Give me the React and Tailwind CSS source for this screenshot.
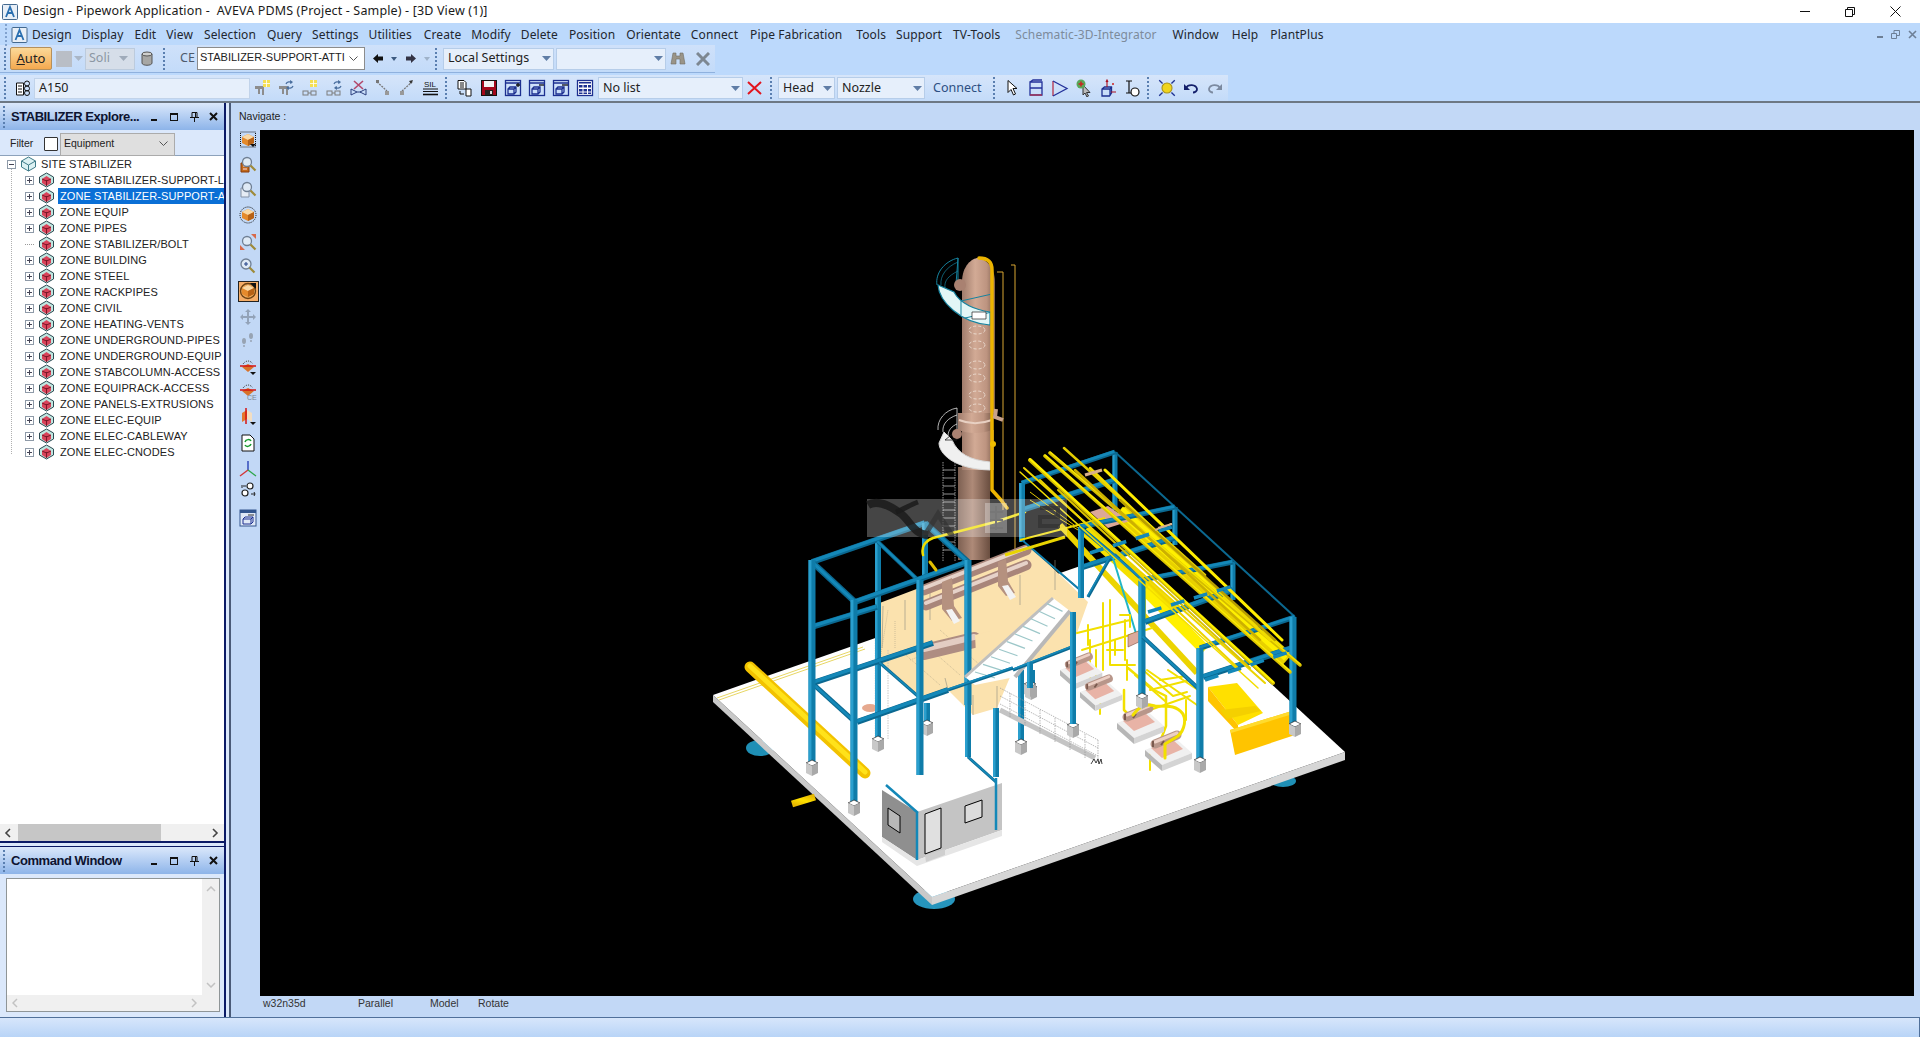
import React from "react";

const Grip = ({ className = "" }) => (
  <div className={"flex flex-col justify-center gap-[2px] w-[3px] shrink-0 " + className}>
    {[0, 1, 2, 3, 4, 5].map((i) => (
      <span key={i} className="block w-[2px] h-[2px] bg-[#5a7fb0]" />
    ))}
  </div>
);

const Arrow = ({ color = "#5f7da6" }) => (
  <svg width="9" height="5" viewBox="0 0 9 5" className="shrink-0"><path d="M0 0h9L4.5 5z" fill={color} /></svg>
);

const Combo = ({ w, text, cls = "", textCls = "text-[#222]" }) => (
  <div className={"flex items-center justify-between h-[22px] shrink-0 bg-[#e6effb] border border-[#b6cde9] pl-1 pr-[2px] text-[12.5px] " + w + " " + cls}>
    <span className={textCls}>{text}</span>
    <Arrow />
  </div>
);

const I = ({ children, w = 24, size = 18 }) => (
  <div className="flex items-center justify-center shrink-0 h-full" style={{ width: w }}>
    <svg width={size} height={size} viewBox="0 0 18 18">{children}</svg>
  </div>
);

const PipeBase = () => (
  <path d="M1 7h9v9H8v-6H6v5H4V10H1z" fill="#8d8d8d" />
);
const Star = ({ x = 9, y = 1 }) => (
  <g fill="#f4df52"><rect x={x} y={y} width="7" height="7" /><path d={`M${x + 3.5} ${y}v7M${x} ${y + 3.5}h7`} stroke="#fff" strokeWidth=".8" /></g>
);
const Cycle = () => (
  <g fill="none" stroke="#4a6f9f" strokeWidth="1.3"><path d="M8 5a3.6 3.6 0 0 1 6-1" /><path d="M15 7a3.6 3.6 0 0 1-6 1" /><path d="M12 1l3 2-3 2zM11 7l-3 2 3 2z" fill="#4a6f9f" stroke="none" /></g>
);
const Valve = () => (
  <g fill="none" stroke="#7d7d7d"><rect x="1" y="12" width="5" height="4" /><rect x="9" y="12" width="5" height="4" /><path d="M6 14h3" /></g>
);

const row2Left = [
  <I key="a"><PipeBase /><Star /></I>,
  <I key="b"><PipeBase /><Cycle /></I>,
  <I key="c"><Valve /><Star x={8} y={1} /></I>,
  <I key="d"><Valve /><Cycle /></I>,
  <I key="e">
    <path d="M4 2l9 8M13 2L4 10" stroke="#b2486b" strokeWidth="1.6" />
    <path d="M1 10v6l6-3zM16 10v6l-6-3z" fill="none" stroke="#2b3f7d" />
    <path d="M7 13h4" stroke="#2b3f7d" />
  </I>,
  <I key="f">
    <path d="M3 3l10 9" stroke="#777" strokeDasharray="2 1" strokeWidth="1.3" /><rect x="2" y="1" width="3" height="3" fill="#777" /><rect x="11" y="12" width="4" height="4" fill="#999" />
  </I>,
  <I key="g">
    <path d="M4 12L15 2" stroke="#777" strokeDasharray="2 1" strokeWidth="1.3" /><path d="M15 1l-4 1 2 3z" fill="#333" /><rect x="2" y="12" width="4" height="4" fill="#999" />
  </I>,
  <I key="h">
    <text x="2" y="8" fontSize="8" fill="#111" fontFamily="Liberation Sans">SIL</text>
    <path d="M1 10h15" stroke="#111" /><path d="M1 12.500h15" stroke="#111" /><path d="M1 15.500h15" stroke="#111" strokeWidth="1.6" />
  </I>,
];

const Cube3 = ({ sign }) => (
  <g fill="none" stroke="#1c2f90" strokeWidth="1.300">
    <rect x="1.500" y="1.500" width="15" height="15" />
    <path d="M2 4h14" stroke="#1c2f90" strokeWidth="1.500" />
    <path d="M4 10l2-2h6v5l-2 2H4zM4 10h6v5M10 10l2-2" />
    {sign === "+" && <path d="M12 6h4M14 4v4" stroke="#111" />}
    {sign === "-" && <path d="M11 6h5" stroke="#111" />}
    {sign === "=" && <path d="M10 6h6" stroke="#111" />}
  </g>
);

const row2Mid = [
  <I key="a" w={27}>
    <path d="M3 1.500h6l2 2V10H3z" fill="#fff" stroke="#111" /><path d="M5 4h4M5 6h4M5 8h4" stroke="#111" />
    <path d="M11 10h5v7h-5z" fill="#fff" stroke="#111" /><path d="M5 12v3h4" fill="none" stroke="#111" />
  </I>,
  <I key="b">
    <rect x="1.500" y="1.500" width="15" height="15" fill="#a3071b" stroke="#111" /><rect x="4" y="2" width="10" height="6" fill="#f2f2f2" /><rect x="5" y="11" width="8" height="5" fill="#222" /><rect x="10" y="12" width="2" height="3" fill="#ddd" />
  </I>,
  <I key="c"><Cube3 sign="+" /></I>,
  <I key="d"><Cube3 sign="-" /></I>,
  <I key="e"><Cube3 sign="=" /></I>,
  <I key="f">
    <rect x="1.500" y="1.500" width="15" height="15" fill="#fff" stroke="#1c2f90" strokeWidth="1.300" />
    <path d="M3 3h12v1.500H3z" fill="#1c2f90" />
    <path d="M3 6h3.500v2.500H3zM7.500 6H11v2.500H7.500zM12 6h3v2.500h-3zM3 10h3.500v2.500H3zM7.500 10H11v2.500H7.500zM12 10h3v2.500h-3zM3 13.500h3.500V15H3zM7.500 13.500H11V15H7.500zM12 13.500h3V15h-3z" fill="#1c2f90" />
  </I>,
];

const row2Right = [
  <I key="a"><path d="M5 1.500v12l3-3 2.500 5.500 2-1L10 9.500h4z" fill="#fff" stroke="#111" /></I>,
  <I key="b"><path d="M3 3h12v13H3zM3 3l3-2h9M3 9h12" fill="none" stroke="#23319a" strokeWidth="1.300" /><path d="M3 16h12" stroke="#b5324a" strokeWidth="1.300" /></I>,
  <I key="c"><path d="M2 2v15" stroke="#b5324a" strokeWidth="1.300" /><path d="M2 2l14 7.500L2 17" fill="none" stroke="#23319a" strokeWidth="1.300" /></I>,
  <I key="d">
    <path d="M8 6v10l2-2 2 4 1.500-1-2-3.500H15z" fill="#bbb" stroke="#333" /><circle cx="6" cy="5" r="4.500" fill="#58a85a" /><path d="M3.500 5h5M6 2.500v5" stroke="#c22" strokeWidth="1.500" />
  </I>,
  <I key="e">
    <path d="M3 10l2.500-2h7v6l-2 3H3zM3 10h8v7M11 10l2-2" fill="none" stroke="#1c2f90" strokeWidth="1.300" /><path d="M8 8V2M7 3l1-2 1 2M12 13h5" stroke="#a12" strokeWidth="1.100" fill="none" /><circle cx="14" cy="5" r="1" fill="#c22" />
  </I>,
  <I key="f"><path d="M6 2v12M3 2h6M3 14h6" stroke="#111" strokeWidth="1.200" fill="none" /><circle cx="12" cy="13" r="4" fill="#fff" stroke="#111" strokeWidth="1.200" /></I>,
];

const row2End = [
  <I key="a" size={20}>
    <circle cx="9" cy="9" r="4.500" fill="#f0d41d" stroke="#a9921a" />
    <path d="M2 2l3 3M16 2l-3 3M2 16l3-3M16 16l-3-3" stroke="#1c2f90" strokeWidth="1.200" />
  </I>,
  <I key="b"><path d="M4 9c2-4 10-4 11 1 .2 2-2 3.500-4 3.500" fill="none" stroke="#14206b" strokeWidth="1.800" /><path d="M2 5v6h6z" fill="#14206b" /></I>,
  <I key="c"><path d="M14 9c-2-4-10-4-11 1-.2 2 2 3.500 4 3.500" fill="none" stroke="#7c8aa0" strokeWidth="1.800" /><path d="M16 5v6h-6z" fill="#7c8aa0" /></I>,
];

const Orange = () => (
  <g><path d="M9 3l6 3v6l-6 3-6-3V6z" fill="#e48a2c" /><path d="M3 6l6 3 6-3-6-3z" fill="#f9d9a6" /><path d="M9 9v6l6-3V6z" fill="#b76216" /></g>
);
const Lens = ({ cx = 7, cy = 7, r = 4.500, fill = "#dfeaf6" }) => (
  <g><circle cx={cx} cy={cy} r={r} fill={fill} stroke="#6f7f94" strokeWidth="1.300" /><path d={`M${cx + 3.5} ${cy + 3.5}l5 5`} stroke="#9e8a3a" strokeWidth="2.200" /></g>
);

const vIcons = [
  { m: "", i: <><rect x="1.500" y="1" width="15" height="15" fill="none" stroke="#111" strokeDasharray="1 1" /><Orange /><path d="M11 13h6l-3 3z" fill="#111" /></> },
  { m: "mt-[5px]", i: <><path d="M2 7h8v9H2z" fill="#c2691b" stroke="#8a3c0d" /><path d="M4 10h4M4 13h4" stroke="#fde" /><Lens cx={8} cy={6} /></> },
  { m: "mt-[5px]", i: <><path d="M2 7h8v9H2z" fill="#e6ecf5" stroke="#8592a6" /><Lens cx={8} cy={6} /></> },
  { m: "mt-[5px]", i: <><circle cx="9" cy="9" r="8" fill="none" stroke="#111" strokeDasharray="1 1" /><Orange /></> },
  { m: "mt-[7px]", i: <><Lens cx={8} cy={8} /><path d="M12 1h5v5zM1 12v5h5z" fill="#d86a4a" /></> },
  { m: "mt-[4px]", i: <><Lens cx={7} cy={7} r={5} /><path d="M5 7h4M7 5v4" stroke="#26448a" strokeWidth="1.100" /></> },
  { m: "mt-[5px]", box: true, i: <><circle cx="9" cy="9" r="7.500" fill="#efaa5d" stroke="#6c4213" strokeWidth="1.400" /><Orange /><path d="M11 1h6v6z" fill="#111" /></> },
  { m: "mt-[6px]", i: <path d="M9 1l3 3h-2v4h4V6l3 3-3 3v-2h-4v4h2l-3 3-3-3h2v-4H4v2L1 9l3-3v2h4V4H6z" fill="#93a3b9" /> },
  { m: "mt-[3px]", i: <><ellipse cx="12" cy="5" rx="2" ry="3" fill="#97a3b3" /><circle cx="12" cy="10" r="1" fill="#97a3b3" /><ellipse cx="5" cy="10" rx="2" ry="3" fill="#97a3b3" /><circle cx="5" cy="15" r="1" fill="#97a3b3" /></> },
  { m: "mt-[7px]", i: <><path d="M4 6c3-4 7-4 10 0" fill="none" stroke="#444" strokeDasharray="1 1" /><path d="M9 6l6 3-6 5-6-5z" fill="#d8722a" /><path d="M1 8h16" stroke="#d41313" strokeWidth="1.500" /><path d="M11 14h6l-3 3z" fill="#111" /></> },
  { m: "mt-[5px]", i: <><path d="M4 5c3-4 7-4 10 0" fill="none" stroke="#444" strokeDasharray="1 1" /><path d="M9 5l6 3-6 5-6-5z" fill="#d8722a" /><path d="M1 7h16" stroke="#d41313" strokeWidth="1.500" /><text x="8" y="17" fontSize="7" fill="#7b8694" fontFamily="Liberation Sans">CE</text></> },
  { m: "mt-[5px]", i: <><path d="M8 2l5 3v9l-5-3z" fill="#f2dec2" /><path d="M8 2L3 5v9l5-3z" fill="#e4782c" /><path d="M7 0v16" stroke="#d41313" strokeWidth="1.500" /><path d="M11 14h6l-3 3z" fill="#111" /></> },
  { m: "mt-[6px]", i: <><path d="M3 1h8l4 4v12H3z" fill="#fff" stroke="#111" /><path d="M6 8c1-3 5-3 6-1M12 10c-1 3-5 3-6 1" fill="none" stroke="#159a2b" strokeWidth="1.500" /></> },
  { m: "mt-[7px]", i: <><path d="M9 9V0" stroke="#2842b8" strokeWidth="1.400" /><path d="M9 9L1 15" stroke="#d33636" strokeWidth="1.400" /><path d="M9 9l8 6" stroke="#2ea649" strokeWidth="1.400" /></> },
  { m: "", i: <><circle cx="11" cy="5" r="3" fill="#fff" stroke="#222" strokeWidth="1.200" /><circle cx="6" cy="12" r="3" fill="#fff" stroke="#222" strokeWidth="1.200" /><path d="M4 5h3M3 4v3M12 13h4M15 11l1 2-1 2" fill="none" stroke="#222" /></> },
  { m: "mt-[8px]", i: <><rect x="1" y="1" width="16" height="16" fill="#dfe8f6" stroke="#32558e" /><rect x="1" y="1" width="16" height="3" fill="#32558e" /><path d="M4 10l2-2h8v5l-2 2H4zM4 10h8v5M12 10l2-2" fill="none" stroke="#1c2f90" /><path d="M9 6h6" stroke="#333" /></> },
];

const Section = ({ title }) => (
  <div className="flex items-center h-[27px] pl-[3px] bg-gradient-to-b from-[#dbe8fb] to-[#8db4e9]">
    <Grip className="mr-[5px]" />
    <span className="flex-1 whitespace-nowrap font-bold text-[13px] tracking-[-0.45px] text-[#0d1330]" style={{ fontFamily: "Liberation Sans, sans-serif" }}>{title}</span>
    <div className="flex items-center pr-[2px]">
      <div className="w-[20px] flex justify-center"><span className="block w-[6px] h-[2px] mt-[6px] bg-[#111]" /></div>
      <div className="w-[20px] flex justify-center"><span className="block w-[8px] h-[8px] border border-[#111] border-t-2" /></div>
      <div className="w-[20px] flex justify-center">
        <svg width="9" height="10" viewBox="0 0 9 10"><path d="M2 .5h5v5H2zM0 5.500h9M4.500 6v4M5.500 1v4" fill="none" stroke="#111" /></svg>
      </div>
      <div className="w-[18px] flex justify-center">
        <svg width="9" height="9" viewBox="0 0 9 9"><path d="M1 1l7 7M8 1L1 8" stroke="#111" strokeWidth="2" /></svg>
      </div>
    </div>
  </div>
);

const SiteIcon = () => (
  <svg width="17" height="16" viewBox="0 0 17 16" className="shrink-0">
    <path d="M8.500 1l7 4v6l-7 4-7-4V5z" fill="#dcf1f3" stroke="#3d7a88" />
    <path d="M1.500 5l7 4 7-4M8.500 9v6" fill="none" stroke="#3d7a88" />
  </svg>
);
const ZoneIcon = () => (
  <svg width="17" height="16" viewBox="0 0 17 16" className="shrink-0">
    <path d="M8.500 1l7 4v6l-7 4-7-4V5z" fill="#bfe6e0" stroke="#2c4a52" />
    <path d="M4 7l4.500-3L13 7v4l-4.500 3L4 11z" fill="#d8435a" />
    <path d="M8.500 8v6M4 7l4.500 2L13 7" fill="none" stroke="#7b1828" />
  </svg>
);
const PlusBox = ({ minus }) => (
  <div className="relative w-[9px] h-[9px] border border-[#8e9aa8] bg-white shrink-0">
    <span className="absolute left-[1px] top-[3px] w-[5px] h-[1px] bg-[#445]" />
    {!minus && <span className="absolute left-[3px] top-[1px] w-[1px] h-[5px] bg-[#445]" />}
  </div>
);

const zones = [
  "ZONE STABILIZER-SUPPORT-L", "ZONE STABILIZER-SUPPORT-A", "ZONE EQUIP", "ZONE PIPES", "ZONE STABILIZER/BOLT", "ZONE BUILDING",
  "ZONE STEEL", "ZONE RACKPIPES", "ZONE CIVIL", "ZONE HEATING-VENTS", "ZONE UNDERGROUND-PIPES", "ZONE UNDERGROUND-EQUIP",
  "ZONE STABCOLUMN-ACCESS", "ZONE EQUIPRACK-ACCESS", "ZONE PANELS-EXTRUSIONS", "ZONE ELEC-EQUIP", "ZONE ELEC-CABLEWAY", "ZONE ELEC-CNODES",
];

const menus = [
  ["Design", "ml-[3px]"], ["Display", "ml-[10px]"], ["Edit", "ml-[11px]"], ["View", "ml-[10px]"], ["Selection", "ml-[11px]"], ["Query", "ml-[11px]"],
  ["Settings", "ml-[10px]"], ["Utilities", "ml-[10px]"], ["Create", "ml-[12px]"], ["Modify", "ml-[10px]"], ["Delete", "ml-[10px]"], ["Position", "ml-[11px]"],
  ["Orientate", "ml-[11px]"], ["Connect", "ml-[10px]"], ["Pipe Fabrication", "ml-[12px]"], ["Tools", "ml-[14px]"], ["Support", "ml-[10px]"], ["TV-Tools", "ml-[11px]"],
  ["Schematic-3D-Integrator", "ml-[15px] text-[#7d8b9b]"], ["Window", "ml-[16px]"], ["Help", "ml-[13px]"], ["PlantPlus", "ml-[12px]"],
];

/* ---------- 3D scene (a drawing) ---------- */
const BLUE = "#1488b8";
const Beam = ({ p, w = 4 }) => (
  <g strokeLinecap="butt">
    <line x1={p[0]} y1={p[1]} x2={p[2]} y2={p[3]} stroke="#0b6890" strokeWidth={w} />
    <line x1={p[0] - 0.6} y1={p[1] - 0.6} x2={p[2] - 0.6} y2={p[3] - 0.6} stroke={BLUE} strokeWidth={w * 0.55} />
  </g>
);
const Col = ({ x, y1, y2, w = 6 }) => (
  <g>
    <rect x={x - w / 2} y={y1} width={w} height={y2 - y1} fill="#0f7ca9" />
    <rect x={x - w / 2} y={y1} width={w / 2.4} height={y2 - y1} fill="#2a9fce" />
  </g>
);
const Ped = ({ x, y }) => (
  <g>
    <path d={`M${x - 6} ${y - 6}l6 -3 6 3 -6 3z`} fill="#fff" stroke="#222" strokeWidth=".7" />
    <path d={`M${x - 6} ${y - 6}l6 3v10l-6 -3z`} fill="#c8c8c8" />
    <path d={`M${x} ${y - 3}l6 -3v10l-6 3z`} fill="#a9a9a9" />
  </g>
);
const Y = ({ d, w = 2, c = "#f2e000" }) => <path d={d} fill="none" stroke={c} strokeWidth={w} strokeLinecap="round" strokeLinejoin="round" />;
const Pump = ({ x, y, s = 1 }) => (
  <g transform={`translate(${x} ${y}) scale(${s})`}>
    <path d="M0 0l17 15 30 -12 -17 -15z" fill="#f0f0f0" />
    <path d="M0 0v6l17 15v-6z" fill="#b6b6b6" />
    <path d="M17 15v6l30 -12v-6z" fill="#d4d4d4" />
    <path d="M6 -2l11 10 21 -9 -11 -10z" fill="#e8b3a6" />
    <path d="M10 -6l22 -9" stroke="#b8968a" strokeWidth="9" strokeLinecap="round" />
    <path d="M10 -8l22 -9" stroke="#ecd0c5" strokeWidth="3" strokeLinecap="round" />
    <path d="M8 -3v-6M16 -5l3 -4" stroke="#7b5a4e" strokeWidth="2" />
  </g>
);

const Scene = () => (
  <svg viewBox="260 130 1654 866" width="1654" height="866" className="block">
    <defs>
      <linearGradient id="tw" x1="0" x2="1" y1="0" y2="0">
        <stop offset="0" stopColor="#a07c6c" /><stop offset=".4" stopColor="#d2aa95" /><stop offset=".75" stopColor="#bd9480" /><stop offset="1" stopColor="#80604f" />
      </linearGradient>
      <linearGradient id="tw2" x1="0" x2="1" y1="0" y2="0">
        <stop offset="0" stopColor="#7d6052" /><stop offset=".45" stopColor="#ae8a78" /><stop offset="1" stopColor="#6a4e40" />
      </linearGradient>
      <linearGradient id="pp" x1="0" x2="1" y1="1" y2="0">
        <stop offset="0" stopColor="#e6b800" /><stop offset=".5" stopColor="#ffe000" /><stop offset="1" stopColor="#e6b800" />
      </linearGradient>
    </defs>

    {/* feet */}
    <ellipse cx="760" cy="748" rx="14" ry="8" fill="#1f8fb5" />
    <ellipse cx="1283" cy="781" rx="13" ry="6" fill="#1f8fb5" />
    <ellipse cx="934" cy="899" rx="21" ry="10" fill="#2695bd" />

    {/* platform */}
    <path d="M713 695L932 897v8L713 702z" fill="#c9c9c9" />
    <path d="M932 897l413 -145v8L932 905z" fill="#d6d6d6" />
    <path d="M713 695L1126 550 1345 752 932 897z" fill="#fff" />
    <path d="M717 698L863 647M719 700L865 649" stroke="#e7d663" strokeWidth="1" />

    {/* pipe left */}
    <path d="M792 804l23 -7" stroke="url(#pp)" strokeWidth="7" />
    <path d="M750 667L865 773" stroke="#f2c200" strokeWidth="11" strokeLinecap="round" />
    <path d="M750 666L865 772" stroke="#ffe21a" strokeWidth="5" strokeLinecap="round" />

    {/* tower */}
    <path d="M958 467h32v93h-32z" fill="url(#tw2)" />
    <path d="M962 282c0 -16 10 -24 16 -24s17 8 17 24V413h-33z" fill="url(#tw)" />
    <path d="M962 430h32v40h-32z" fill="url(#tw)" />
    <path d="M958 413h34v17c-10 4 -24 4 -34 0z" fill="url(#tw)" />
    <path d="M959 420c10 4 22 4 33 0" stroke="#e8d0c2" strokeWidth="2" fill="none" />
    {[330, 345, 365, 378, 395, 408].map((y) => (
      <ellipse key={y} cx="977" cy={y} rx="8" ry="4" fill="none" stroke="#f0e4da" strokeWidth=".8" strokeDasharray="3 2" />
    ))}
    {/* top platform */}
    <path d="M938 285c1 16 22 38 52 40v-13c-14 -2 -30 -8 -36 -20z" fill="#e2f6f6" stroke="#16839f" strokeWidth="1.200" />
    <path d="M937 285c-2 -12 8 -24 21 -27v30M958 258l-2 26M961 301l31 -7M992 296v30M961 301v14M965 318l27 -6" fill="none" stroke="#16839f" strokeWidth="1" />
    <path d="M941 285c-1 -9 5 -18 17 -23M945 288c-1 -7 3 -12 13 -17" fill="none" stroke="#16839f" strokeWidth=".7" />
    <circle cx="960" cy="285" r="6" fill="#a98171" />
    <path d="M972 312h14v7h-14z" fill="#fff" stroke="#222" strokeWidth=".7" />
    {/* lower platform */}
    <path d="M939 443c0 10 14 26 51 27v-8c-20 -2 -32 -8 -38 -22l-8 -8z" fill="#f0f0f0" stroke="#d9d9d9" strokeWidth="1" />
    <path d="M938 430c-1 -10 7 -20 19 -22M957 408v22M943 432c-1 -8 5 -14 14 -17M948 436c0 -6 4 -10 9 -12" fill="none" stroke="#fff" strokeWidth=".7" />
    <path d="M945 440l10 -8 2 8z" fill="none" stroke="#222" strokeWidth=".8" />
    <circle cx="957" cy="434" r="5" fill="#a98171" />
    {/* ladder */}
    <path d="M943 462v100M955 462v100" stroke="#d0d0d0" strokeWidth=".7" strokeDasharray="1.500 1" />
    {[470, 478, 486, 494, 502, 510, 518, 526, 534, 542, 550].map((y) => (
      <line key={y} x1="943" x2="955" y1={y} y2={y} stroke="#d0d0d0" strokeWidth=".7" />
    ))}
    {/* column pipes */}
    <Y d="M979 258c6 0 13 2 13 12V490l9 10 6 8" w="3.500" c="#ecb400" />
    <path d="M1003 272h-6M1003 272V510M1015 265h-4M1015 265V560" stroke="#d9a632" strokeWidth="1" fill="none" />
    <circle cx="993" cy="444" r="3" fill="#f0be00" />
    <path d="M1003 420l-8 -3 1 -8" stroke="#c9a28c" strokeWidth="4" fill="none" />

    {/* deck */}
    <path d="M877 604L1030 546l58 56 -16 45 -59 23 -16 38 -24 7 -25 -25 -28 8 -40 -35z" fill="#fbe2ae" />
    <path d="M883 606l-1 42M905 600v30M930 590v30M1020 575v30M1055 560v30M948 690l-3 -12M973 715v-20M997 708v-22" stroke="#8d8d7f" strokeWidth=".6" />
    <path d="M880 660l8 -50M895 648V620M910 660l40 -15M900 650l40 35M920 640l40 35M940 630l40 35" stroke="#a09880" strokeWidth=".5" strokeDasharray="1 1" />

    {/* lower vessel on deck */}
    <path d="M924 652l50 -12" stroke="#ae8d82" strokeWidth="16" strokeLinecap="round" />
    <path d="M924 649l50 -12" stroke="#e3cdc3" strokeWidth="6" strokeLinecap="round" />
    <path d="M975 635l15 -4 4 18 -18 5z" fill="#fbe2ae" />

    {/* back columns under deck */}
    <Col x="927" y1="703" y2="724" />
    <Col x="968" y1="700" y2="757" />
    <Col x="996" y1="708" y2="777" />
    <Col x="1021" y1="670" y2="742" w="6" />
    <Col x="1032" y1="670" y2="688" w="6" />
    <Ped x="927" y="729" /><Ped x="1021" y="748" /><Ped x="1031" y="693" />
    <path d="M875 640v100" stroke="#ddd" strokeWidth=".8" strokeDasharray="1.500 1" />
    <path d="M888 650v90" stroke="#bbb" strokeWidth=".8" strokeDasharray="1.500 1" />
    <ellipse cx="870" cy="708" rx="8" ry="4" fill="#e6a98f" />

    {/* door frame beams */}
    <Beam p={[968, 757, 996, 782]} w={3} />

    {/* Building */}
    <path d="M882 790l35 22v48l-35 -23z" fill="#8f8f8f" />
    <path d="M917 812l85 -29v47l-85 30z" fill="#c4c4c4" />
    <path d="M917 860l85 -30v6l-85 30zM882 837l35 23v6l-35 -24z" fill="#e6e6e6" />
    <path d="M888 808l12 8v17l-12 -8z" fill="#b8b8b8" stroke="#000" strokeWidth="1" />
    <path d="M925 814l16 -6v40l-16 6z" fill="#e0e0e0" stroke="#000" strokeWidth="1" />
    <path d="M965 806l17 -6v17l-17 6z" fill="#dcdcdc" stroke="#000" strokeWidth="1" />
    <path d="M886 785l32 28M917 812v48M996 778v52" stroke={BLUE} strokeWidth="2.500" fill="none" />
    <path d="M925 855l20 -6v6l-19 7z" fill="#cfcfcf" />

    {/* horizontal exchangers */}
    <path d="M924 590l102 -40" stroke="#a8857a" strokeWidth="11" strokeLinecap="round" />
    <path d="M924 588l102 -40" stroke="#e6d2c9" strokeWidth="4" strokeLinecap="round" />
    <path d="M926 605l100 -40" stroke="#a8857a" strokeWidth="11" strokeLinecap="round" />
    <path d="M926 603l100 -40" stroke="#e6d2c9" strokeWidth="4" strokeLinecap="round" />
    <path d="M942 582l10 -4 2 28 8 12 -10 3 -10 -12zM998 562l8 -3 2 22 7 12 -9 3 -8 -10z" fill="#b5917f" />
    <path d="M946 610l8 14 6 -3 -8 -12zM1002 586l8 14 6 -3 -8 -12z" fill="#f3f3f3" />

    {/* main steel */}
    <Col x="878" y1="542" y2="740" w="6" />
    <Ped x="878" y="745" />
    <Beam p={[812, 562, 925, 523]} w={6} />
    <Beam p={[925, 523, 968, 562]} w={6} />
    <Col x="925" y1="523" y2="575" />
    <Beam p={[878, 542, 920, 582]} w={4} />
    <Beam p={[812, 562, 855, 602]} w={6} />
    <Beam p={[855, 602, 968, 562]} w={6} />
    <Beam p={[812, 627, 877, 607]} w={6} />
    <Beam p={[812, 683, 855, 722]} w={5} />
    <Beam p={[813, 683, 933, 643]} w={6} />
    <Beam p={[857, 722, 948, 690]} w={6} />
    <Beam p={[880, 663, 920, 698]} w={3} />
    <Col x="812" y1="560" y2="763" w="7" />
    <Col x="854" y1="600" y2="803" w="7" />
    <Col x="920" y1="580" y2="775" w="7" />
    <Col x="968" y1="560" y2="705" w="7" />
    <Ped x="812" y="769" /><Ped x="854" y="809" />
    {/* cross pipe */}
    <Y d="M923 555c-2 -8 2 -14 10 -17l62 -16 30 -10" w="2.500" />
    <Y d="M930 562l6 8" w="3" c="#e3c000" />

    {/* stairs & handrail */}
    <path d="M1053 598l17 13 -55 66 -40 8 -10 -8z" fill="#fff" />
    <path d="M965 677l88 -79" stroke="#bfbfbf" strokeWidth="3" />
    <path d="M1015 677l55 -66" stroke="#b8b8b8" strokeWidth="4" />
    {[0, 1, 2, 3, 4, 5, 6, 7, 8, 9].map((n) => (
      <line key={n} x1={975 + n * 8} y1={672 - n * 7.6} x2={995 + n * 7.5} y2={678 - n * 7.4} stroke="#9cc7c9" strokeWidth="1.200" />
    ))}
    <Beam p={[1013, 670, 1072, 647]} w={3} />
    <Beam p={[948, 690, 1013, 668]} w={3} />

    {/* walkway fence */}
    <path d="M1000 710l95 48" stroke="#c4c4c4" strokeWidth="5" />
    <g stroke="#9a9a9a" strokeWidth=".7" strokeDasharray="1.500 1">
      <path d="M1000 688l98 52M1000 696l98 52M1000 704l98 52" />
      <path d="M1010 693v24M1025 702v24M1040 710v24M1055 718v24M1070 726v24M1085 734v24M1098 740v20" />
    </g>
    <path d="M1091 764l3 -5 2 4 2 -4 1 5 2 -5 1 5" stroke="#111" fill="none" strokeWidth=".8" />

    {/* rack */}
    <g>
      <Col x="1115" y1="452" y2="510" w="5" />
      <Col x="1175" y1="507" y2="545" w="5" />
      <Col x="1233" y1="562" y2="600" w="5" />
      <path d="M1115 452L1295 617" stroke="#0b6890" strokeWidth="2" />
      <Beam p={[1022, 483, 1115, 452]} w={5} />
      <Beam p={[1022, 510, 1115, 480]} w={6} />
      <Col x="1022" y1="483" y2="542" w="6" />
      <Beam p={[1022, 540, 1080, 590]} w={2} />
    </g>

    {/* pipes under */}
    <path d="M1120 512L1287 660" stroke="#e8d000" strokeWidth="16" />
    <path d="M1120 510L1287 657" stroke="#fff000" strokeWidth="9" />
    <path d="M1060 525L1197 673" stroke="#ecd400" strokeWidth="6" />
    <path d="M1085 530l90 82" stroke="#f5e000" strokeWidth="12" />
    <path d="M1145 590l60 60" stroke="#fff000" strokeWidth="11" />
    <path d="M1090 512l18 -6 22 15 -22 7z" fill="#dca898" />
    <path d="M1020 540l85 -22" stroke="#f0dc00" strokeWidth="2" />
    <path d="M1005 555l60 -18" stroke="#e8d400" strokeWidth="3" />
    <path d="M1030 500l80 50M1030 492l80 60" stroke="#e3c800" strokeWidth="1" />

    {/* Frame 2 */}
    <Beam p={[1080, 527, 1175, 507]} w={5} />
    <Beam p={[1083, 567, 1177, 537]} w={6} />
    <Col x="1081" y1="527" y2="598" w="6" />
    <Beam p={[1080, 527, 1143, 580]} w={4} />
    <Beam p={[1110, 558, 1088, 597]} w={3} />
    <path d="M1113 558l25 82" stroke="#22b6c6" strokeWidth="2" />

    {/* small piping */}
    <g>
      <Y d="M1077 633l53 -13M1082 650l70 -22M1103 603v67M1110 600v65M1125 620v40M1145 592v30M1107 650h16M1110 665h25M1120 615h10v12" />
      <Y d="M1090 640v48l8 8M1096 650v30M1127 660v20M1088 625v20M1115 640v15" />
      <Y d="M1150 690l40 -10M1150 710l40 -14M1147 670l50 35M1168 670l30 20M1186 700v20M1150 750v20M1100 690v24M1160 680l26 -4" />
      <Y d="M1124 690v20l6 6M1128 668l26 22 12 6v30l-6 16v14" w="2.500" />
      <Y d="M1135 675l30 26M1143 670l30 26 14 -4" w="2" />
    </g>
    <path d="M1128 635l13 -5v11l-13 6z" fill="#dcaa9c" stroke="#6b3c30" strokeWidth=".5" />
    <Pump x={1060} y={670} s={0.9} />
    <Pump x={1080} y={692} s={0.9} />
    <Pump x={1117} y={723} />
    <Pump x={1145} y={750} />
    <Y d="M1133 715c6 -8 12 -12 22 -9 16 0 22 0 28 8 4 8 0 20 -8 24l-10 6v14" w="3" />

    {/* Yellow box */}
    <path d="M1208 687l29 -4 26 30 -25 12z" fill="#ffe000" />
    <path d="M1208 687l30 38v8l-30 -32z" fill="#ffc400" />
    <path d="M1230 730l65 -20v25l-60 20z" fill="#ffc400" />
    <path d="M1230 730l65 -20 1 3 -65 20z" fill="#ffdb2e" />
    <path d="M1220 710l35 -4 6 5 -34 8z" fill="#f4d000" />

    {/* Frame 3, 4 */}
    <Beam p={[1142, 580, 1233, 562]} w={5} />
    <Beam p={[1145, 622, 1233, 590]} w={6} />
    <Col x="1142" y1="578" y2="697" w="7" />
    <Ped x="1142" y="702" />
    <Beam p={[1143, 637, 1200, 690]} w={4} />
    <Beam p={[1200, 648, 1295, 617]} w={5} />
    <Beam p={[1203, 677, 1295, 647]} w={6} />
    <Col x="1293" y1="617" y2="727" w="7" />
    <Col x="1200" y1="648" y2="760" w="7" />
    <Ped x="1200" y="766" />
    <Ped x="1295" y="730" />
    <Ped x="1073" y="731" /><Ped x="1030" y="690" />
    <Col x="1073" y1="612" y2="724" w="6" />
    <Col x="1030" y1="662" y2="688" w="6" />

    {/* long thin pipes on top */}
    <g fill="none" strokeLinecap="round">
      <path d="M1050 453L1300 665" stroke="#d4bc00" strokeWidth="3.500" />
      <path d="M1050 452L1300 664" stroke="#f6e400" strokeWidth="1.500" />
      <path d="M1030 460L1273 683" stroke="#d4bc00" strokeWidth="4" />
      <path d="M1030 459L1273 682" stroke="#fff000" strokeWidth="2" />
      <path d="M1045 456L1290 672" stroke="#dcc400" strokeWidth="3.500" />
      <path d="M1045 455L1290 671" stroke="#faea00" strokeWidth="1.500" />
      <path d="M1024 468L1265 683" stroke="#ecd400" strokeWidth="2" />
      <path d="M1020 472L1258 688" stroke="#f3de00" strokeWidth="1.500" />
      <path d="M1064 448L1205 575" stroke="#e3cc00" strokeWidth="2.500" />
      <path d="M1075 470L1260 640" stroke="#ccb000" strokeWidth="2.500" />
      <path d="M1090 468L1270 640" stroke="#f0dc00" strokeWidth="2.500" />
      <path d="M1105 470L1282 640" stroke="#ffec00" strokeWidth="3" />
      <path d="M1120 500L1275 640" stroke="#b89e00" strokeWidth="2.500" />
      <path d="M1040 480L1240 670" stroke="#eed400" strokeWidth="2" />
      <path d="M1058 490L1250 668" stroke="#dcc400" strokeWidth="2" />
    </g>
    <path d="M1085 475l17 -5" stroke="#d8b08a" strokeWidth="3" />
    <path d="M1155 530l17 -6M1158 528l14 -4" stroke="#d8b08a" strokeWidth="2" />

    {/* Blue over pipes */}
    <path d="M1090 553l85 -27M1148 612l85 -26M1205 680l90 -30" stroke={BLUE} strokeWidth="3.500" strokeDasharray="14 10" />

    {/* watermark */}
    <rect x="867" y="499" width="200" height="38" fill="#fff" opacity=".27" />
    <path d="M868 505c10 -6 22 1 32 8s14 22 28 22" fill="none" stroke="#1b1b1b" strokeWidth="8" opacity=".85" />
    <path d="M896 512c8 -3 14 -7 22 -10" fill="none" stroke="#1b1b1b" strokeWidth="5" opacity=".85" />
    <path d="M922 535l16 -26 17 26h-7l-10 -16 -10 16z" fill="#333" opacity=".7" />
    <rect x="985" y="503" width="22" height="30" fill="#fff" opacity=".3" />
    <path d="M990 512h13M990 520h13M990 528h13M996 506v24" stroke="#777" strokeWidth="2" />
    <path d="M1040 508h18v9h-18v9h20" fill="none" stroke="#333" strokeWidth="4" opacity=".8" />
  </svg>
);

export default function App() {
  return (
    <div className="w-[1932px] h-[1037px] overflow-hidden bg-white flex flex-col text-[#111]" style={{ fontFamily: "'Noto Sans', 'Open Sans', sans-serif" }}>
      {/* title */}
      <div className="flex items-center h-[23px] shrink-0 text-[12.5px] tracking-[0.15px] text-[#1a1a1a]">
        <div className="w-[23px] flex pl-[2px]">
          <svg width="16" height="16" viewBox="0 0 16 16"><rect x=".5" y=".5" width="15" height="15" rx="1" fill="#e8eff7" stroke="#44698f" /><path d="M4 13l4-10 4 10M6 9h4" fill="none" stroke="#2a6fb0" strokeWidth="1.800" /></svg>
        </div>
        <span className="whitespace-pre">Design - Pipework Application -  AVEVA PDMS (Project - Sample) - [3D View (1)]</span>
        <div className="ml-auto flex items-center pr-[13px]">
          <div className="w-[45px] flex justify-center"><span className="block w-[10px] h-[1px] bg-[#111]" /></div>
          <div className="w-[45px] flex justify-center">
            <svg width="10" height="10" viewBox="0 0 10 10"><path d="M.5 2.500h7v7h-7zM2.500 2.500v-2h7v7h-2" fill="none" stroke="#111" /></svg>
          </div>
          <div className="w-[47px] flex justify-center">
            <svg width="11" height="11" viewBox="0 0 11 11"><path d="M.5.500l10 10M10.500.500l-10 10" stroke="#111" /></svg>
          </div>
        </div>
      </div>

      <div className="w-[1920px] flex-1 flex flex-col min-h-0 bg-[#c2d8f6]">
        {/* top dock */}
        <div className="h-[80px] shrink-0 bg-[#bcd9fc] border-b-2 border-[#6d7884] flex flex-col">
          {/* menu */}
          <div className="flex items-center h-[22px] pt-[1px] pl-[5px] text-[12px] text-[#22262e] tracking-[0.1px]">
            <Grip className="mr-[2px] opacity-60" />
            <div className="ml-[1px] w-[18px] h-[18px] flex items-center">
              <svg width="17" height="16" viewBox="0 0 16 16"><rect x=".5" y=".5" width="15" height="15" rx="1" fill="#e8eff7" stroke="#44698f" /><path d="M4 13l4-10 4 10M6 9h4" fill="none" stroke="#2a6fb0" strokeWidth="1.800" /></svg>
            </div>
            {menus.map(([t, c]) => <span key={t} className={c + " whitespace-nowrap"}>{t}</span>)}
            <div className="ml-auto flex items-center gap-[8px] pr-[3px] text-[#6d7f96]">
              <span className="block w-[6px] h-[2px] mt-[4px] bg-[#6d7f96]" />
              <svg width="9" height="9" viewBox="0 0 9 9"><path d="M.5 3.500h5v5h-5zM3 3.500v-3h5.500v5H6" fill="none" stroke="#6d7f96" /></svg>
              <svg width="9" height="9" viewBox="0 0 9 9"><path d="M1 1l7 7M8 1L1 8" stroke="#6d7f96" strokeWidth="1.600" /></svg>
            </div>
          </div>
          {/* row 1 */}
          <div className="flex items-center h-[28px] w-[715px] pl-[4px] bg-gradient-to-b from-[#cfe1fa] to-[#c3dbf9] border-b border-[#8fb1de] text-[12.5px]">
            <Grip className="mr-[3px]" />
            <div className="w-[42px] h-[23px] shrink-0 rounded-[2px] border border-[#b5905c] bg-gradient-to-b from-[#fbd998] to-[#f4a94e] flex items-center justify-center text-[13px] text-[#222]"><span className="underline">A</span>uto</div>
            <div className="ml-[4px] w-[16px] h-[16px] shrink-0 bg-[#b9bec6]" />
            <div className="ml-[2px]"><Arrow color="#a9b6c7" /></div>
            <div className="ml-[2px] flex items-center justify-between w-[50px] h-[22px] shrink-0 bg-[#d6dee9] border border-[#bccbdd] pl-[3px] pr-[6px] text-[#8c96a3]"><span>Soli</span><Arrow color="#9fabba" /></div>
            <div className="ml-[2px] w-[20px] flex justify-center shrink-0">
              <svg width="12" height="15" viewBox="0 0 12 15"><path d="M1 3v9c0 3 10 3 10 0V3z" fill="#a7a7a5" stroke="#555" /><ellipse cx="6" cy="3" rx="5" ry="2" fill="#cfcfcd" stroke="#555" /></svg>
            </div>
            <Grip className="ml-[6px]" />
            <span className="ml-[14px] w-[15px] shrink-0 text-[#4d5a6c]">CE</span>
            <div className="ml-[2px] flex items-center justify-between w-[168px] h-[23px] shrink-0 bg-white border border-[#8c8c8c] pl-[2px] pr-[6px] text-[11px] text-[#222]" style={{ fontFamily: "Liberation Sans, sans-serif" }}>
              <span className="-mt-[3px] whitespace-nowrap">STABILIZER-SUPPORT-ATTI</span>
              <svg width="9" height="6" viewBox="0 0 9 6"><path d="M.5.500l4 4 4-4" fill="none" stroke="#555" /></svg>
            </div>
            <div className="ml-[7px] w-[12px] flex justify-center shrink-0">
              <svg width="10" height="9" viewBox="0 0 10 9"><path d="M0 4.500L5 0v2.500h5v4H5V9z" fill="#111" /></svg>
            </div>
            <div className="ml-[7px]"><svg width="6" height="4" viewBox="0 0 6 4"><path d="M0 0h6L3 4z" fill="#3d5a80" /></svg></div>
            <div className="ml-[7px] w-[14px] flex justify-center shrink-0">
              <svg width="10" height="9" viewBox="0 0 10 9"><path d="M10 4.500L5 0v2.500H0v4h5V9z" fill="#334" /></svg>
            </div>
            <div className="ml-[6px]"><svg width="6" height="4" viewBox="0 0 6 4"><path d="M0 0h6L3 4z" fill="#9fb2c9" /></svg></div>
            <Grip className="ml-[5px]" />
            <Combo w="w-[111px] ml-[5px]" text="Local Settings" />
            <Combo w="w-[110px] ml-[2px]" text="" />
            <div className="w-[24px] flex justify-center shrink-0">
              <svg width="16" height="14" viewBox="0 0 16 14"><path d="M3 1h3v3h4V1h3l2 11h-5V7H6v5H1z" fill="#9a9488" stroke="#6f6b62" strokeWidth=".6" /></svg>
            </div>
            <div className="ml-[1px] w-[24px] flex justify-center shrink-0">
              <svg width="14" height="14" viewBox="0 0 14 14"><path d="M1 1l12 12M13 1L1 13" stroke="#7d8791" strokeWidth="3" /></svg>
            </div>
          </div>
          <div className="h-[2px]" />
          {/* row 2 */}
          <div className="flex items-center h-[26px] w-[1228px] pl-[4px] bg-gradient-to-b from-[#d6e5fa] to-[#c3dbf9] text-[12.5px]">
            <Grip />
            <div className="ml-[7px] w-[20px] flex justify-center shrink-0">
              <svg width="18" height="16" viewBox="0 0 18 16"><path d="M1.500 3h7v12h-7zM3 6h4M3 9h4M3 12h4" fill="#fff" stroke="#111" /><circle cx="12" cy="3.500" r="2.500" fill="none" stroke="#111" /><circle cx="12" cy="8.500" r="2.500" fill="none" stroke="#111" /><circle cx="12" cy="13" r="2.500" fill="none" stroke="#111" /></svg>
            </div>
            <div className="w-[216px] h-[21px] shrink-0 bg-[#e6effb] border border-[#c1d3ea] flex items-center pl-[4px] text-[#222]">A150</div>
            <div className="ml-[1px] flex items-center h-full">{row2Left}</div>
            <Grip className="ml-[2px]" />
            <div className="ml-[2px] flex items-center h-full">{row2Mid}</div>
            <Combo w="w-[145px] ml-[1px]" text="No list" />
            <div className="w-[22px] flex justify-center shrink-0">
              <svg width="15" height="14" viewBox="0 0 15 14"><path d="M1 1l13 12M14 1L1 13" stroke="#e2141d" strokeWidth="2" /></svg>
            </div>
            <Grip className="ml-[5px]" />
            <Combo w="w-[57px] ml-[5px]" text="Head" />
            <Combo w="w-[88px] ml-[2px]" text="Nozzle" />
            <span className="ml-[8px] w-[48px] shrink-0 text-[#2d4f82]">Connect</span>
            <Grip className="ml-[12px]" />
            <div className="ml-[4px] flex items-center h-full">{row2Right}</div>
            <Grip className="ml-[3px]" />
            <div className="ml-[5px] flex items-center h-full">{row2End}</div>
          </div>
        </div>

        {/* main */}
        <div className="flex-1 flex min-h-0">
          {/* left dock */}
          <div className="w-[226px] shrink-0 flex flex-col border-r-2 border-[#0b1a66] bg-[#c2d8f6]">
            <Section title="STABILIZER Explore..." />
            <div className="flex items-center h-[26px] pt-[3px] bg-[#dbe8fb] border-b border-[#8da2bb] text-[10.5px]" style={{ fontFamily: "Liberation Sans, sans-serif" }}>
              <span className="ml-[10px] w-[22px] shrink-0 text-[#222]">Filter</span>
              <div className="ml-[12px] w-[14px] h-[14px] shrink-0 bg-white border border-[#333] rounded-[1px]" />
              <div className="ml-[2px] w-[115px] h-[23px] shrink-0 bg-[#dfdfdf] border border-[#ababab] flex items-center justify-between pl-[3px] pr-[6px] text-[#222]">
                <span>Equipment</span>
                <svg width="9" height="6" viewBox="0 0 9 6"><path d="M.5.500l4 4 4-4" fill="none" stroke="#555" /></svg>
              </div>
            </div>
            <div className="flex-1 min-h-0 flex flex-col bg-white relative text-[11px] tracking-[0.1px] overflow-hidden" style={{ fontFamily: "Liberation Sans, sans-serif" }}>
              <div className="absolute left-[11px] top-[12px] w-0 h-[286px] border-l border-dotted border-[#b0b0b0]" />
              <div className="relative flex items-center h-[16px] pl-[7px]">
                <PlusBox minus />
                <div className="ml-[4px]"><SiteIcon /></div>
                <span className="ml-[4px] text-[#222] whitespace-nowrap">SITE STABILIZER</span>
              </div>
              {zones.map((z, i) => (
                <div key={z} className="relative flex items-center h-[16px] pl-[25px]">
                  {i === 4 ? <div className="w-[9px] h-[1px] border-t border-dotted border-[#999]" /> : <PlusBox />}
                  <div className="ml-[4px]"><ZoneIcon /></div>
                  <span className={"ml-[3px] pl-[2px] h-[16px] leading-[16px] flex-1 whitespace-nowrap overflow-hidden " + (i === 1 ? "bg-[#0a6fd6] text-white" : "text-[#222]")}>{z}</span>
                </div>
              ))}
              <div className="mt-auto h-[17px] shrink-0 bg-[#f0f0f0] flex items-center relative">
                <svg width="16" height="12" viewBox="0 0 16 12" className="shrink-0"><path d="M10 2L6 6l4 4" fill="none" stroke="#444" strokeWidth="1.600" /></svg>
                <div className="ml-[2px] w-[143px] h-full bg-[#c6c6c6]" />
                <svg width="16" height="12" viewBox="0 0 16 12" className="absolute right-[1px]"><path d="M6 2l4 4-4 4" fill="none" stroke="#444" strokeWidth="1.600" /></svg>
              </div>
            </div>
            <div className="h-[2px] bg-[#0b1a66] shrink-0" />
            <div className="h-[3px] bg-[#dbe8fb] shrink-0" />
            <div className="h-[1px] bg-[#0b1a66] shrink-0" />
            <Section title="Command Window" />
            <div className="h-[143px] shrink-0 bg-[#dbe8fb] pl-[6px] pr-[4px] pt-[4px]">
              <div className="h-[134px] border border-[#8f9597] bg-white flex flex-col">
                <div className="flex-1 flex min-h-0">
                  <div className="flex-1" />
                  <div className="w-[17px] bg-[#f0f0f0] flex flex-col items-center justify-between py-[7px]">
                    <svg width="10" height="6" viewBox="0 0 10 6"><path d="M1 5l4-4 4 4" fill="none" stroke="#c2c2c2" strokeWidth="1.500" /></svg>
                    <svg width="10" height="6" viewBox="0 0 10 6"><path d="M1 1l4 4 4-4" fill="none" stroke="#c2c2c2" strokeWidth="1.500" /></svg>
                  </div>
                </div>
                <div className="h-[16px] bg-[#f0f0f0] flex items-center justify-between px-[5px] pr-[22px]">
                  <svg width="6" height="10" viewBox="0 0 6 10"><path d="M5 1L1 5l4 4" fill="none" stroke="#c2c2c2" strokeWidth="1.500" /></svg>
                  <svg width="6" height="10" viewBox="0 0 6 10"><path d="M1 1l4 4-4 4" fill="none" stroke="#c2c2c2" strokeWidth="1.500" /></svg>
                </div>
              </div>
            </div>
          </div>

          <div className="w-[3px] shrink-0 bg-[#dbe8fb]" />

          {/* document */}
          <div className="flex-1 min-w-0 flex flex-col border-l-2 border-[#4a5a77] bg-[#c2d8f6] pr-[6px]">
            <div className="h-[27px] shrink-0 flex items-center pl-[8px] text-[10.5px] text-[#222]" style={{ fontFamily: "Liberation Sans, sans-serif" }}>Navigate :</div>
            <div className="h-[866px] shrink-0 flex">
              <div className="w-[29px] shrink-0 flex flex-col items-center pl-[5px]">
                {vIcons.map((v, i) => (
                  <div key={i} className={(v.m || "") + " h-[20px] flex items-center justify-center shrink-0 w-[24px]"}>
                    <div className={v.box ? "w-[21px] h-[21px] flex items-center justify-center shrink-0 bg-[#f4ad68] border border-[#222]" : "w-[20px] h-[20px] flex items-center justify-center"}>
                      <svg width="18" height="18" viewBox="0 0 18 18">{v.i}</svg>
                    </div>
                  </div>
                ))}
              </div>
              <div className="flex-1 bg-black overflow-hidden"><Scene /></div>
            </div>
            <div className="flex items-center h-[15px] shrink-0 text-[10.5px] text-[#333]" style={{ fontFamily: "Liberation Sans, sans-serif" }}>
              <span className="ml-[32px] w-[95px]">w32n35d</span>
              <span className="w-[72px]">Parallel</span>
              <span className="w-[48px]">Model</span>
              <span>Rotate</span>
            </div>
          </div>
        </div>

        {/* status */}
        <div className="h-[20px] shrink-0 border-t border-[#50709a] border-r bg-gradient-to-b from-[#d7e6fb] to-[#b8d4f7]" />
      </div>
    </div>
  );
}
